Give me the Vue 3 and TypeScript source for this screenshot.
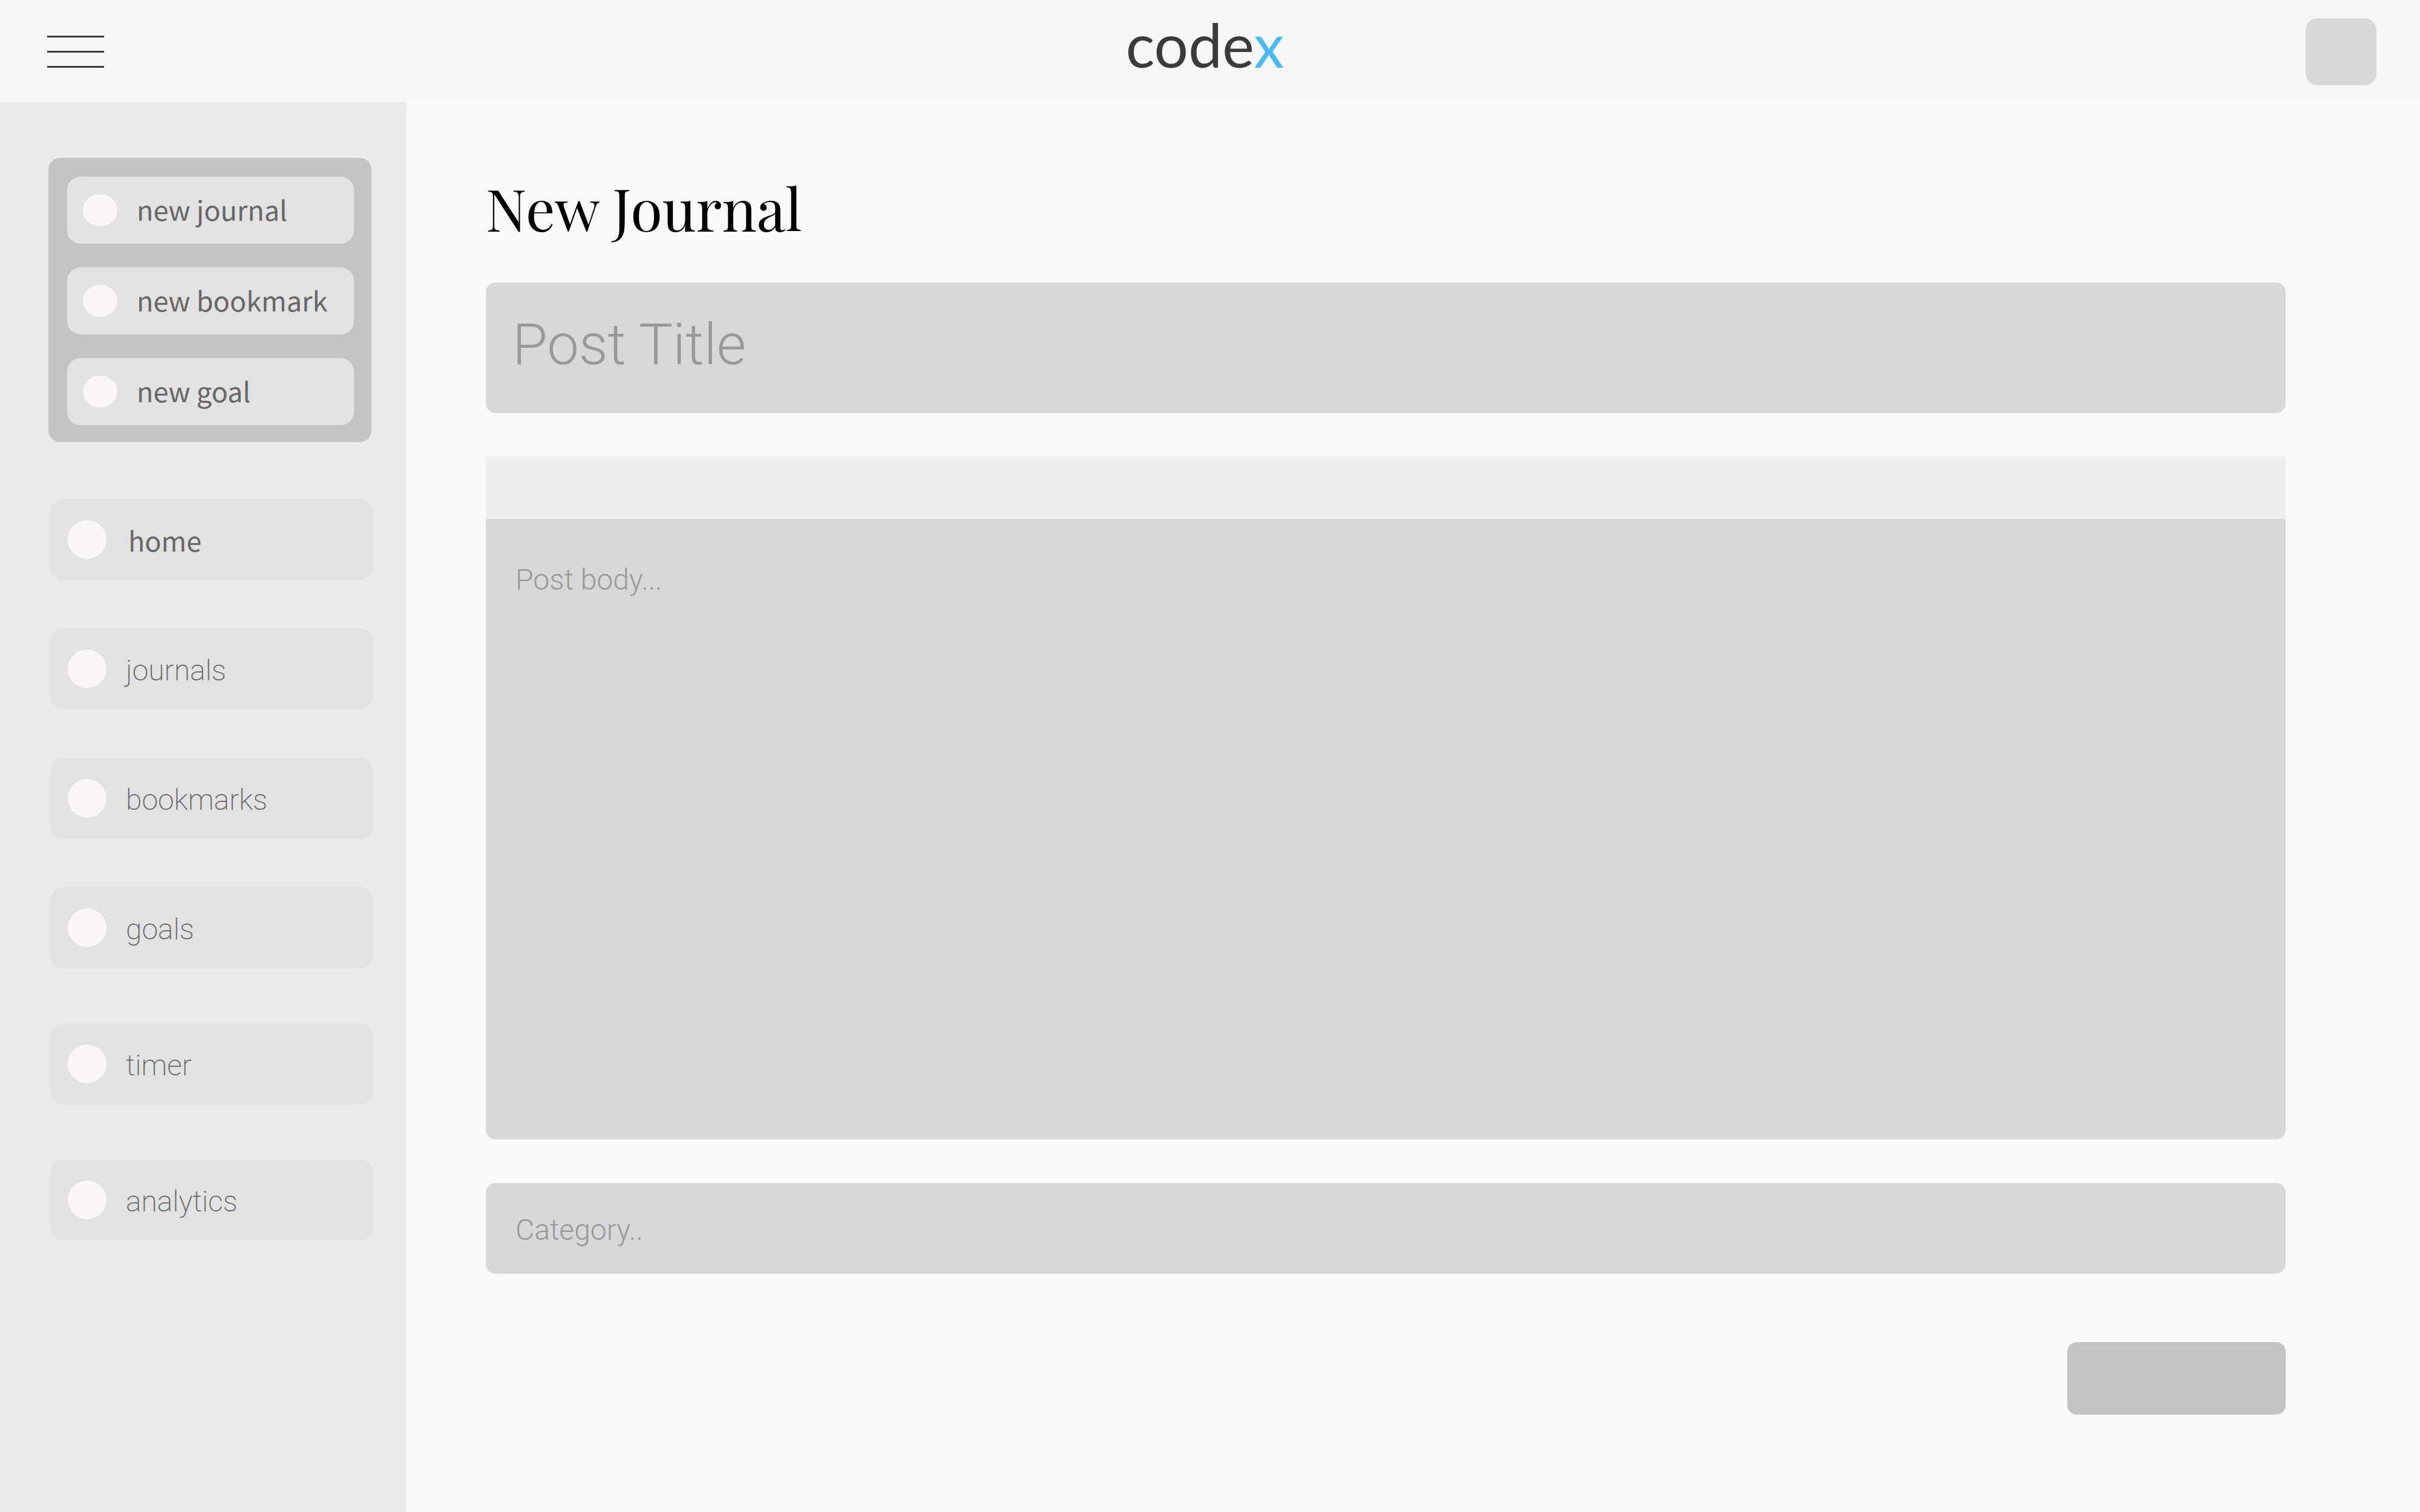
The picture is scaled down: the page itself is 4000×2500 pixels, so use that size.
<script setup lang="ts">
import { ref } from 'vue'

interface NavItem {
  label: string
  href: string
  active?: boolean
}

const createActions: string[] = ['new journal', 'new bookmark', 'new goal']

const contentLinks: NavItem[] = [
  { label: 'home', href: '#home', active: true },
  { label: 'journals', href: '#journals' },
  { label: 'bookmarks', href: '#bookmarks' },
  { label: 'goals', href: '#goals' },
]

const toolLinks: NavItem[] = [
  { label: 'timer', href: '#timer' },
  { label: 'analytics', href: '#analytics' },
]

const title = ref('')
const body = ref('')
const category = ref('')
</script>

<template>
  <div class="app">
    <header class="topbar">
      <button class="menu" type="button" aria-label="Menu">
        <span></span>
        <span></span>
        <span></span>
      </button>
      <a class="logo" href="#home">code<span class="logo-x">x</span></a>
      <button class="avatar" type="button" aria-label="Account"></button>
    </header>

    <div class="layout">
      <aside class="sidebar">
        <div class="create-panel">
          <button v-for="action in createActions" :key="action" class="create" type="button">
            <span class="create-dot"></span>
            <span class="create-label">{{ action }}</span>
          </button>
        </div>

        <nav class="nav">
          <ul class="nav-group">
            <li v-for="item in contentLinks" :key="item.label">
              <a class="nav-link" :class="{ active: item.active }" :href="item.href">
                <span class="nav-dot"></span>
                <span class="nav-label">{{ item.label }}</span>
              </a>
            </li>
          </ul>
          <ul class="nav-group tools">
            <li v-for="item in toolLinks" :key="item.label">
              <a class="nav-link" :href="item.href">
                <span class="nav-dot"></span>
                <span class="nav-label">{{ item.label }}</span>
              </a>
            </li>
          </ul>
        </nav>
      </aside>

      <main class="main">
        <h1 class="heading">New Journal</h1>
        <form class="form" @submit.prevent>
          <input v-model="title" class="field title" type="text" placeholder="Post Title" aria-label="Post title" />
          <div class="editor">
            <div class="toolbar" role="toolbar" aria-label="Formatting"></div>
            <textarea v-model="body" class="body" placeholder="Post body..." aria-label="Post body"></textarea>
          </div>
          <input v-model="category" class="field category" type="text" placeholder="Category.." aria-label="Category" />
          <button class="submit" type="submit" aria-label="Save"></button>
        </form>
      </main>
    </div>
  </div>
</template>

<style>
body {
  margin: 0;
  background: #f9f9f9;
}
</style>

<style scoped>
* {
  box-sizing: border-box;
}

button,
input,
textarea {
  border: 0;
  outline: 0;
  margin: 0;
  font: inherit;
  color: inherit;
}

button {
  cursor: pointer;
}

.app {
  display: flex;
  flex-direction: column;
  min-height: 100vh;
  font-family: Roboto, "Liberation Sans", sans-serif;
  font-size: 48px;
  font-weight: 200;
  color: #676767;
}

.topbar {
  display: flex;
  align-items: center;
  justify-content: space-between;
  height: 169px;
  padding: 2px 72px 0 78px;
  background: #f6f6f6;
}

.menu {
  display: flex;
  flex-direction: column;
  gap: 22px;
  width: 94px;
  padding: 0;
  background: none;
}

.menu span {
  height: 3px;
  background: #3b3b3b;
}

.logo {
  padding-bottom: 26px;
  font-family: Lato, sans-serif;
  font-size: 100px;
  line-height: 120px;
  font-weight: 400;
  color: #3b3b3b;
  text-decoration: none;
}

.logo-x {
  color: #47b9ff;
}

.avatar {
  width: 117px;
  height: 111px;
  border-radius: 20px;
  background: #d8d8d8;
}

.layout {
  display: flex;
  flex: 1;
}

.sidebar {
  flex: none;
  width: 672px;
  padding: 92px 55px 92px 80px;
  background: #eaeaea;
}

.create-panel {
  display: flex;
  flex-direction: column;
  gap: 39px;
  width: 534px;
  padding: 31px 29px 28px 31px;
  border-radius: 20px;
  background: #c3c3c3;
}

.create {
  display: flex;
  align-items: center;
  gap: 32px;
  height: 111px;
  padding: 0 26px;
  border-radius: 22px;
  background: #e2e2e2;
  font-family: "Noto Sans CJK SC", sans-serif;
  font-size: 45px;
  font-weight: 400;
  white-space: nowrap;
}

.create-label {
  padding-bottom: 4px;
}

.create-dot {
  flex: none;
  width: 57px;
  height: 53px;
  border-radius: 50%;
  background: #faf6f6;
}

.nav {
  padding: 94px 0 0 3px;
}

.nav-group {
  display: flex;
  flex-direction: column;
  gap: 80px;
  margin: 0;
  padding: 0;
  list-style: none;
}

.tools {
  gap: 91px;
  margin-top: 91px;
}

.nav-link {
  display: flex;
  align-items: center;
  gap: 32px;
  height: 134px;
  padding: 0 29px;
  border-radius: 22px;
  background: #e2e2e2;
  color: inherit;
  text-decoration: none;
}

.nav-label {
  padding-top: 4px;
}

.nav-link.active {
  gap: 36px;
  font-family: "Noto Sans CJK SC", sans-serif;
  font-size: 45px;
  font-weight: 400;
}

.active .nav-label {
  padding-top: 0;
}

.nav-dot {
  flex: none;
  width: 64px;
  height: 64px;
  border-radius: 50%;
  background: #faf6f6;
}

.main {
  display: flex;
  flex-direction: column;
  flex: 1;
  min-width: 0;
  padding: 108px 222px 161px 131px;
}

.heading {
  margin: 0;
  font-family: "Playfair Display", "Liberation Serif", serif;
  font-size: 96px;
  line-height: 132px;
  font-weight: 400;
  color: #000000;
}

.form {
  display: flex;
  flex-direction: column;
  flex: 1;
  margin-top: 58px;
}

.field {
  width: 100%;
  border-radius: 16px;
  background: #d8d8d8;
}

::placeholder {
  color: #999999;
  font-weight: 300;
  opacity: 1;
}

.title {
  height: 216px;
  padding: 0 44px 10px;
  font-size: 94px;
}

.editor {
  display: flex;
  flex-direction: column;
  flex: 1;
  margin: 72px 0;
  border-radius: 0 0 16px 16px;
  overflow: hidden;
}

.toolbar {
  height: 103px;
  background: #efefef;
}

.body {
  flex: 1;
  width: 100%;
  min-height: 400px;
  padding: 71px 49px;
  line-height: 60px;
  background: #d8d8d8;
  resize: none;
}

.category {
  height: 150px;
  padding: 4px 49px 0;
}

.submit {
  align-self: flex-end;
  width: 361px;
  height: 120px;
  margin-top: 113px;
  border-radius: 16px;
  background: #c3c3c3;
}
</style>
